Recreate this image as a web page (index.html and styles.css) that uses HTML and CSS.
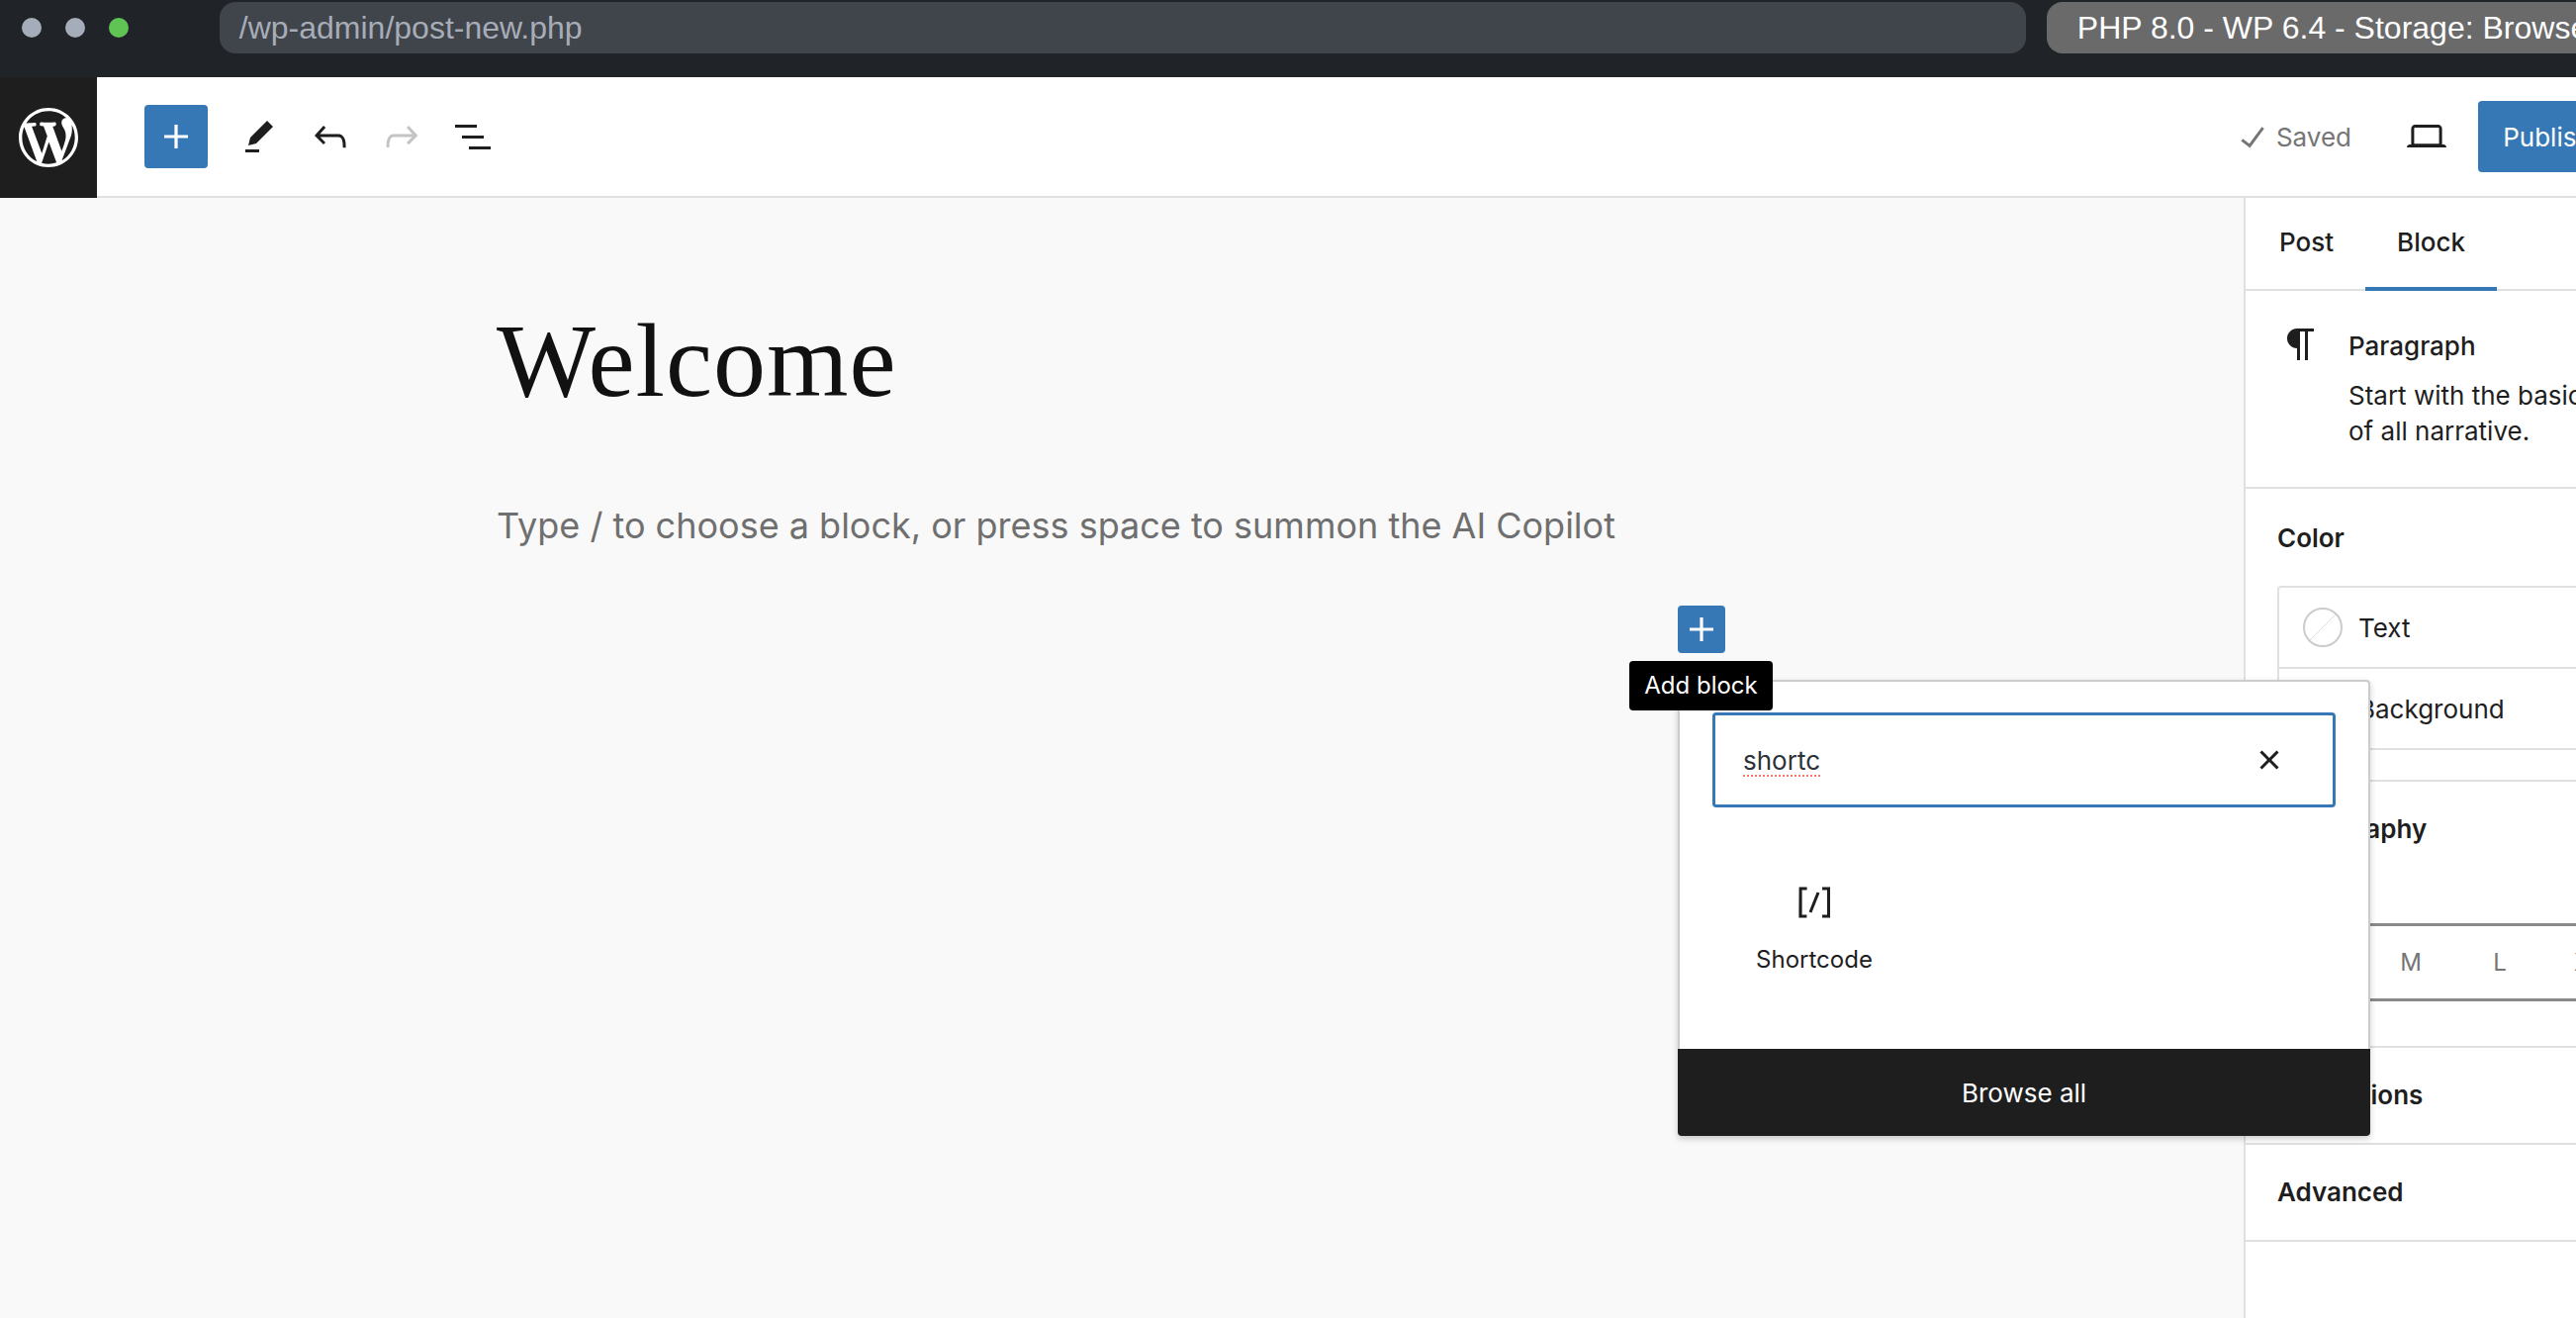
FILE: index.html
```html
<!DOCTYPE html>
<html lang="en">
<head>
    <meta charset="UTF-8">
    <title>New Post</title>
    <link rel="stylesheet" href="styles.css">
</head>
<body>
<div class="app">
    <div class="topbar">
        <div class="dots">
            <span class="dot"></span>
            <span class="dot"></span>
            <span class="dot dot-green"></span>
        </div>
        <div class="address">/wp-admin/post-new.php</div>
        <div class="env-tab">PHP 8.0 - WP 6.4 - Storage: Browser</div>
    </div>

    <header class="header">
        <a class="wp-logo">
            <svg width="60" height="60" viewBox="0 0 20 20"><path fill="#fff" d="M20 10c0-5.51-4.49-10-10-10C4.48 0 0 4.49 0 10c0 5.52 4.48 10 10 10 5.51 0 10-4.48 10-10zM7.78 15.37L4.37 6.22c.55-.02 1.17-.08 1.17-.08.5-.06.44-1.13-.06-1.11 0 0-1.45.11-2.37.11-.18 0-.37 0-.58-.01C4.12 2.69 6.87 1.11 10 1.11c2.33 0 4.45.87 6.05 2.34-.68-.11-1.65.39-1.65 1.58 0 .74.45 1.36.9 2.1.35.61.55 1.36.55 2.46 0 1.49-1.4 5-1.4 5l-3.03-8.37c.54-.02.82-.17.82-.17.5-.05.44-1.25-.06-1.22 0 0-1.44.12-2.38.12-.87 0-2.33-.12-2.33-.12-.5-.03-.56 1.2-.06 1.22l.92.08 1.26 3.41zM17.41 10c.24-.64.74-1.87.43-4.25.7 1.29 1.05 2.71 1.05 4.25 0 3.29-1.73 6.24-4.4 7.78.97-2.59 1.94-5.2 2.92-7.78zM6.1 18.09C3.12 16.65 1.11 13.53 1.11 10c0-1.3.23-2.48.72-3.59C3.25 10.3 4.67 14.2 6.1 18.09zm4.03-6.63l2.58 6.98c-.86.29-1.76.45-2.71.45-.79 0-1.57-.11-2.29-.33.81-2.38 1.62-4.74 2.42-7.1z"/></svg>
        </a>
        <div class="header-bar">
            <div class="toolbar">
                <button class="add-btn">
                    <svg width="48" height="48" viewBox="0 0 24 24"><path fill="#fff" d="M18 11.2h-5.2V6h-1.6v5.2H6v1.6h5.2V18h1.6v-5.2H18z"/></svg>
                </button>
                <svg class="tool" width="48" height="48" viewBox="0 0 24 24"><path d="m19 7-3-3-8.5 8.5-1 4 4-1L19 7Zm-7 11.5H5V20h7v-1.5Z"/></svg>
                <svg class="tool" width="48" height="48" viewBox="0 0 24 24"><path d="M18.3 11.7c-.6-.6-1.4-.9-2.3-.9H6.7l2.9-3.3-1.1-1-4.5 5L8.5 16l1-1-2.7-2.7H16c.5 0 .9.2 1.3.5 1 1 1 3.4 1 4.5v.3h1.5v-.2c0-1.5 0-4.3-1.5-5.7z"/></svg>
                <svg class="tool tool-off" width="48" height="48" viewBox="0 0 24 24"><path d="M15.6 6.5l-1.1 1 2.9 3.3H8c-.9 0-1.7.3-2.3.9-1.4 1.5-1.4 4.2-1.4 5.6v.2h1.5v-.3c0-1.1 0-3.5 1-4.5.3-.3.7-.5 1.3-.5h9.2L14.5 15l1.1 1.1 4.6-4.6-4.6-5z"/></svg>
                <svg class="tool" width="48" height="48" viewBox="0 0 24 24"><path d="M3 6h11v1.5H3V6Zm3.5 5.5h11V13h-11v-1.5ZM21 17H10v1.5h11V17Z"/></svg>
            </div>
            <div class="actions">
                <div class="saved">
                    <svg width="48" height="48" viewBox="0 0 24 24"><path fill="#757575" d="M16.7 7.1l-6.3 8.5-3.3-2.5-.9 1.2 4.5 3.4L17.9 8z"/></svg>
                    <span>Saved</span>
                </div>
                <svg class="tool" width="48" height="48" viewBox="0 0 24 24"><path d="M20.5 16h-.7V8c0-1.1-.9-2-2-2H6.2c-1.1 0-2 .9-2 2v8h-.7c-.8 0-1.5.7-1.5 1.5h20c0-.8-.7-1.5-1.5-1.5zM5.7 8c0-.3.2-.5.5-.5h11.6c.3 0 .5.2.5.5v7.6H5.7V8z"/></svg>
                <button class="publish">Publish</button>
            </div>
        </div>
    </header>

    <div class="main">
        <div class="canvas">
            <h1 class="post-title">Welcome</h1>
            <p class="placeholder">Type / to choose a block, or press space to summon the AI Copilot</p>
        </div>

        <aside class="sidebar">
            <div class="tabs">
                <div class="tab">Post</div>
                <div class="tab tab-active">Block</div>
            </div>
            <div class="block-card">
                <svg width="48" height="48" viewBox="0 0 24 24"><path fill="#1e1e1e" d="m9.99609 14v-.2251l.00391.0001v6.225h1.5v-14.5h2.5v14.5h1.5v-14.5h3v-1.5h-8.50391c-2.76142 0-5 2.23858-5 5 0 2.7614 2.23858 5 5 5z"/></svg>
                <div>
                    <div class="block-name">Paragraph</div>
                    <div class="block-desc">Start with the basic building block<br>of all narrative.</div>
                </div>
            </div>
            <section class="panel color-panel">
                <h2 class="panel-title">Color</h2>
                <div class="color-list">
                    <div class="color-row"><span class="swatch"></span>Text</div>
                    <div class="color-row"><span class="swatch"></span>Background</div>
                </div>
            </section>
            <section class="panel type-panel">
                <h2 class="panel-title">Typography</h2>
                <div class="sizes">
                    <span>S</span>
                    <span>M</span>
                    <span>L</span>
                    <span>XL</span>
                </div>
            </section>
            <section class="panel">
                <h2 class="panel-title">Dimensions</h2>
            </section>
            <section class="panel">
                <h2 class="panel-title">Advanced</h2>
            </section>
        </aside>

        <button class="inline-add">
            <svg width="48" height="48" viewBox="0 0 24 24"><path fill="#fff" d="M18 11.2h-5.2V6h-1.6v5.2H6v1.6h5.2V18h1.6v-5.2H18z"/></svg>
        </button>

        <div class="inserter">
            <div class="inserter-body">
                <div class="search">
                    <span class="search-text">shortc</span>
                    <svg width="48" height="48" viewBox="0 0 24 24"><path fill="#1e1e1e" d="M12 13.06l3.712 3.713 1.061-1.06L13.061 12l3.712-3.712-1.06-1.06L12 10.938 8.288 7.227l-1.061 1.06L10.939 12l-3.712 3.712 1.06 1.061L12 13.061z"/></svg>
                </div>
                <div class="result">
                    <svg width="48" height="48" viewBox="0 0 24 24"><path fill="#1e1e1e" d="M16 4.2v1.5h2.5v12.5H16v1.5h4V4.2h-4zM4.2 19.8h4v-1.5H5.8V5.8h2.5V4.2h-4l-.1 15.6zm5.1-3.1l1.4.6 4-10-1.4-.6-4 10z"/></svg>
                    <span>Shortcode</span>
                </div>
            </div>
            <button class="browse-all">Browse all</button>
        </div>

        <div class="tooltip">Add block</div>
    </div>
</div>
</body>
</html>
```

FILE: styles.css
```css
html, body {
    margin: 0;
    height: 100%;
    overflow: hidden;
}
body {
    font-family: 'Inter', sans-serif;
    font-size: 26px;
    color: #1e1e1e;
    background-color: #202328;
}
button {
    font-family: inherit;
    border: none;
    padding: 0;
    cursor: pointer;
}
svg {
    display: block;
}
.app {
    width: 2828px;
    height: 1332px;
    display: flex;
    flex-direction: column;
}

/* browser strip */
.topbar {
    height: 78px;
    flex: none;
    box-sizing: border-box;
    padding: 2px 0 24px 22px;
    display: flex;
    font-family: 'Liberation Sans', sans-serif;
    font-size: 32px;
    line-height: 52px;
}
.dots {
    display: flex;
    align-items: center;
    gap: 24px;
    width: 200px;
}
.dot {
    width: 20px;
    height: 20px;
    border-radius: 50%;
    background-color: #a5adba;
}
.dot-green {
    background-color: #5fc454;
}
.address {
    width: 1828px;
    box-sizing: border-box;
    padding-left: 20px;
    border-radius: 16px;
    background-color: #40444b;
    color: #a7adb8;
}
.env-tab {
    margin-left: 21px;
    width: 760px;
    box-sizing: border-box;
    padding-left: 31px;
    border-radius: 16px;
    background-color: #6a6a6a;
    color: #fff;
    white-space: nowrap;
}

/* editor header */
.header {
    height: 122px;
    flex: none;
    display: flex;
    background-color: #fff;
}
.wp-logo {
    width: 98px;
    background-color: #1e1e1e;
    display: flex;
    align-items: center;
    justify-content: center;
}
.header-bar {
    flex: 1;
    display: flex;
    align-items: center;
    justify-content: space-between;
    border-bottom: 2px solid #e0e0e0;
    padding: 0 183px 0 48px;
}
.toolbar {
    display: flex;
    align-items: center;
    gap: 24px;
}
.tool {
    fill: #1e1e1e;
}
.tool-off {
    fill: #c4c4c4;
}
.add-btn {
    width: 64px;
    height: 64px;
    margin-right: 4px;
    border-radius: 4px;
    background-color: #3578b5;
    display: flex;
    align-items: center;
    justify-content: center;
}
.actions {
    display: flex;
    align-items: center;
}
.saved {
    display: flex;
    align-items: center;
    gap: 0;
    color: #757575;
    margin-right: 52px;
}
.publish {
    margin-left: 28px;
    width: 140px;
    height: 72px;
    border-radius: 4px;
    background-color: #3578b5;
    color: #fff;
    font-size: 26px;
}

/* main area */
.main {
    position: relative;
    flex: 1;
    display: flex;
    background-color: #f9f9f9;
}
.canvas {
    width: 2268px;
    flex: none;
    box-sizing: border-box;
    padding: 100px 0 0 502px;
}
.post-title {
    margin: 0;
    font-family: 'Liberation Serif', serif;
    font-size: 106px;
    font-weight: 400;
    line-height: 130px;
    letter-spacing: 1px;
    color: #111;
}
.placeholder {
    margin: 76px 0 0;
    font-size: 36px;
    line-height: 50px;
    color: #6f6f6f;
}

/* settings sidebar */
.sidebar {
    flex: 1;
    background-color: #fff;
    border-left: 2px solid #e0e0e0;
}
.tabs {
    display: flex;
    height: 94px;
    box-sizing: border-box;
    padding-left: 2px;
    border-bottom: 2px solid #e0e0e0;
}
.tab {
    height: 94px;
    box-sizing: border-box;
    padding: 0 32px;
    line-height: 90px;
    font-weight: 500;
}
.tab-active {
    border-bottom: 4px solid #3578b5;
}
.block-card {
    display: flex;
    gap: 24px;
    padding: 30px 32px 38px;
    border-bottom: 2px solid #e0e0e0;
    line-height: 36px;
}
.block-name {
    font-weight: 500;
    margin: 8px 0 14px;
}
.panel {
    padding: 30px 32px;
    border-bottom: 2px solid #e0e0e0;
}
.panel-title {
    margin: 0;
    font-size: 26px;
    font-weight: 600;
    line-height: 36px;
}
.color-panel {
    padding-top: 32px;
}
.color-list {
    margin-top: 30px;
    border: 2px solid #e0e0e0;
    border-radius: 4px;
}
.color-row {
    height: 80px;
    display: flex;
    align-items: center;
    gap: 16px;
    padding-left: 24px;
}
.color-row + .color-row {
    border-top: 2px solid #e0e0e0;
}
.swatch {
    width: 40px;
    height: 40px;
    box-sizing: border-box;
    border: 2px solid #ccc;
    border-radius: 50%;
    background: linear-gradient(135deg, transparent 49%, #ddd 49%, #ddd 51%, transparent 51%);
    transform: rotate(0deg);
}
.type-panel {
    height: 269px;
    box-sizing: border-box;
}
.sizes {
    margin-top: 77px;
    height: 79px;
    box-sizing: border-box;
    border-top: 3px solid #8a8a8a;
    border-bottom: 3px solid #8a8a8a;
    display: flex;
    align-items: center;
    color: #757575;
    font-size: 24px;
}
.sizes span {
    width: 90px;
    text-align: center;
}

/* floating things over the editor */
.inline-add {
    position: absolute;
    left: 1696px;
    top: 412px;
    width: 48px;
    height: 48px;
    border-radius: 4px;
    background-color: #3578b5;
}
.tooltip {
    position: absolute;
    left: 1647px;
    top: 468px;
    width: 145px;
    height: 50px;
    border-radius: 4px;
    background-color: #000;
    color: #fff;
    font-size: 24px;
    line-height: 50px;
    text-align: center;
}
.inserter {
    position: absolute;
    left: 1696px;
    top: 487px;
    width: 700px;
    border-radius: 4px;
    box-shadow: 0 3px 6px rgba(0, 0, 0, 0.2);
}
.inserter-body {
    height: 373px;
    box-sizing: border-box;
    padding: 31px 33px 0;
    background-color: #fff;
    border: 2px solid #ccc;
    border-bottom: none;
    border-radius: 4px 4px 0 0;
}
.search {
    height: 96px;
    box-sizing: border-box;
    border: 3px solid #3578b5;
    border-radius: 4px;
    display: flex;
    align-items: center;
    justify-content: space-between;
    padding: 0 40px 0 28px;
}
.search-text {
    font-size: 26px;
    color: #2c3338;
    text-decoration: underline dotted #f0776c 2px;
    text-underline-offset: 6px;
}
.result {
    width: 206px;
    margin-top: 72px;
    display: flex;
    flex-direction: column;
    align-items: center;
    gap: 16px;
    font-size: 24px;
    line-height: 36px;
}
.browse-all {
    display: block;
    width: 100%;
    height: 88px;
    border-radius: 0 0 4px 4px;
    background-color: #1e1e1e;
    color: #fff;
    font-size: 26px;
}
```
